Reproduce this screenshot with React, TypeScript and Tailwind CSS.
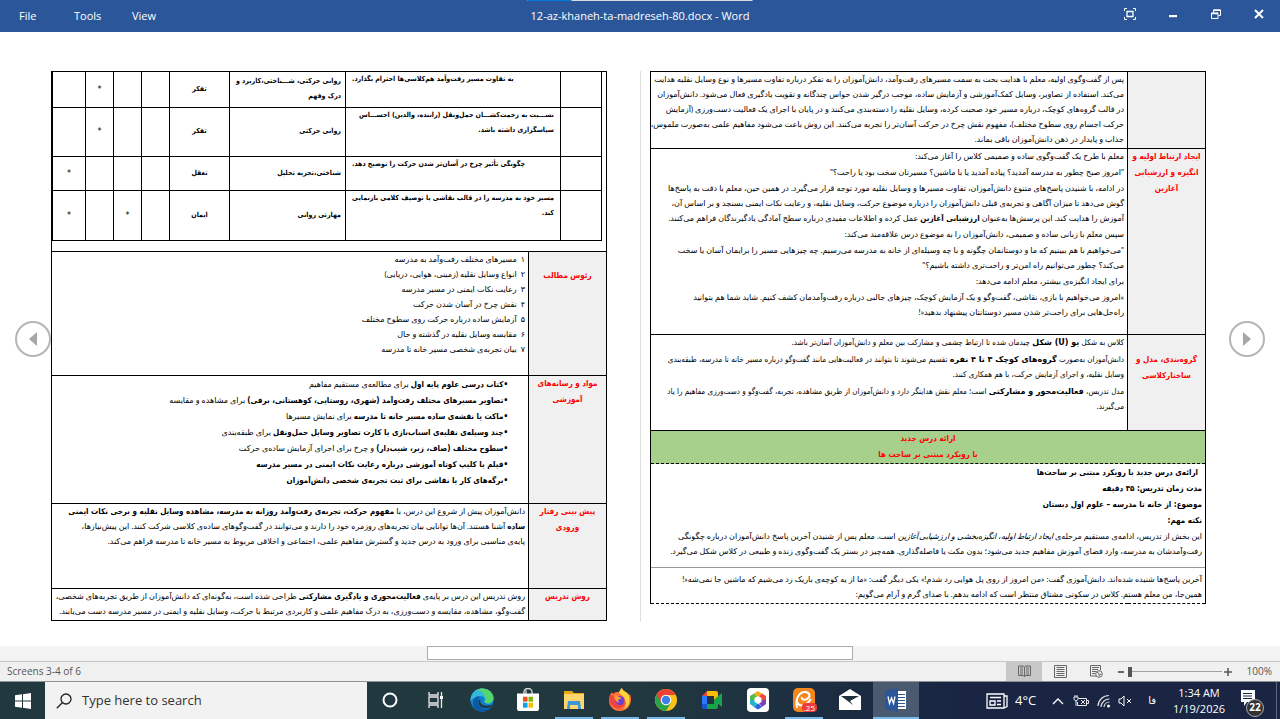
import { ReactNode } from "react";

const outcomes = [
  {
    lines: ["به تفاوت مسیر رفت‌وآمد هم‌کلاسی‌ها احترام بگذارد."],
    skills: ["روانی حرکتی، شـــناختی،کاربرد و", "درک وفهم"],
    element: "تفکر",
    marks: ["", "", "*", ""],
    height: "h-[35px]",
    end: true,
  },
  {
    lines: ["نســـبت به زحمت‌کشـــان حمل‌ونقل (راننده، والدین) احســـاس", "سپاسگزاری داشته باشد."],
    skills: ["روانی حرکتی"],
    element: "تفکر",
    marks: ["", "", "*", ""],
    height: "h-[49px]",
    end: false,
  },
  {
    lines: ["چگونگی تأثیر چرخ در آسان‌تر شدن حرکت را توضیح دهد."],
    skills: ["شناختی،تجزیه تحلیل"],
    element: "تعقل",
    marks: ["", "", "", "*"],
    height: "h-[34px]",
    end: true,
  },
  {
    lines: ["مسیر خود به مدرسه را در قالب نقاشی یا توصیف کلامی بازنمایی", "کند."],
    skills: ["مهارتی روانی"],
    element: "ایمان",
    marks: ["", "*", "", "*"],
    height: "h-[50px]",
    end: false,
  },
];

const topics = [
  "مسیرهای مختلف رفت‌وآمد به مدرسه",
  "انواع وسایل نقلیه (زمینی، هوایی، دریایی)",
  "رعایت نکات ایمنی در مسیر مدرسه",
  "نقش چرخ در آسان شدن حرکت",
  "آزمایش ساده درباره حرکت روی سطوح مختلف",
  "مقایسه وسایل نقلیه در گذشته و حال",
  "بیان تجربه‌ی شخصی مسیر خانه تا مدرسه",
];

const materials = [
  ["کتاب درسی علوم پایه اول", " برای مطالعه‌ی مستقیم مفاهیم"],
  ["تصاویر مسیرهای مختلف رفت‌وآمد (شهری، روستایی، کوهستانی، برفی)", " برای مشاهده و مقایسه"],
  ["ماکت یا نقشه‌ی ساده مسیر خانه تا مدرسه", " برای نمایش مسیرها"],
  ["چند وسیله‌ی نقلیه‌ی اسباب‌بازی یا کارت تصاویر وسایل حمل‌ونقل", " برای طبقه‌بندی"],
  ["سطوح مختلف (صاف، زبر، شیب‌دار)", " و چرخ برای اجرای آزمایش ساده‌ی حرکت"],
  ["فیلم یا کلیپ کوتاه آموزشی درباره رعایت نکات ایمنی در مسیر مدرسه", ""],
  ["برگه‌های کار یا نقاشی برای ثبت تجربه‌ی شخصی دانش‌آموزان", ""],
];

function Line({ children }: { children: ReactNode }) {
  return <span className="block whitespace-nowrap">{children}</span>;
}

function RowTitle({ lines, className = "" }: { lines: string[]; className?: string }) {
  return (
    <th
      scope="row"
      className={`w-[78px] border border-black bg-[#f0f0f0] p-0 align-top font-['DejaVu_Sans_Condensed','DejaVu_Sans',sans-serif] text-[8px] font-bold leading-4 text-[#fe0000] ${className}`}
    >
      {lines.map((line) => (
        <Line key={line}>{line}</Line>
      ))}
    </th>
  );
}

function LeftPage() {
  return (
    <table
      dir="rtl"
      className="w-full table-fixed border-collapse border border-black font-['Lato','DejaVu_Sans',sans-serif] text-[8px] leading-[15px] [&_b]:font-['DejaVu_Sans_Condensed','DejaVu_Sans',sans-serif] [&_b]:leading-none"
    >
      <colgroup>
        <col className="w-[78px]" />
        <col />
      </colgroup>
      <tbody>
        <tr className="h-[180px]">
          <td colSpan={2} className="border border-black p-0 pr-1 align-top">
            <table className="w-full table-fixed border-collapse font-['DejaVu_Sans_Condensed','DejaVu_Sans',sans-serif] text-[7px] font-bold">
              <colgroup>
                <col className="w-[41px]" />
                <col />
                <col className="w-[116px]" />
                <col className="w-[60px]" />
                <col className="w-[28px]" />
                <col className="w-[28px]" />
                <col className="w-[28px]" />
                <col className="w-[33px]" />
              </colgroup>
              <tbody>
                {outcomes.map((row, i) => (
                  <tr key={i} className={row.height}>
                    <td className="border border-t-0 border-black" />
                    <td className={`border border-t-0 border-black px-[6px] align-top ${row.end ? "text-left" : ""}`}>
                      {row.lines.map((line) => (
                        <Line key={line}>{line}</Line>
                      ))}
                    </td>
                    <td className="border border-t-0 border-black px-1">
                      {row.skills.map((line) => (
                        <Line key={line}>{line}</Line>
                      ))}
                    </td>
                    <td className="border border-t-0 border-black text-center">{row.element}</td>
                    {row.marks.map((mark, j) => (
                      <td key={j} className="border border-t-0 border-black text-center text-[9px] font-normal">
                        {mark}
                      </td>
                    ))}
                  </tr>
                ))}
              </tbody>
            </table>
          </td>
        </tr>
        <tr className="h-[124px]">
          <RowTitle lines={["رئوس مطالب"]} className="pt-4" />
          <td className="border border-black px-[3px] align-top">
            <ul>
              {topics.map((topic, i) => (
                <li key={topic} className="flex gap-1 whitespace-nowrap">
                  <span>{"۱۲۳۴۵۶۷"[i]}</span>
                  <span>{topic}</span>
                </li>
              ))}
            </ul>
          </td>
        </tr>
        <tr className="h-[128px]">
          <RowTitle lines={["مواد و رسانه‌های", "آموزشی"]} />
          <td className="border border-black px-5 align-top leading-4">
            <ul>
              {materials.map(([strong, rest]) => (
                <li key={strong} className="whitespace-nowrap">
                  <b>•{strong}</b>
                  {rest}
                </li>
              ))}
            </ul>
          </td>
        </tr>
        <tr className="h-[85px]">
          <RowTitle lines={["پیش بینی رفتار", "ورودی"]} />
          <td className="border border-black px-[3px] align-top">
            <Line>
              دانش‌آموزان پیش از شروع این درس، با <b>مفهوم حرکت، تجربه‌ی رفت‌وآمد روزانه به مدرسه، مشاهده وسایل نقلیه و برخی نکات ایمنی</b>
            </Line>
            <Line>
              <b>ساده</b> آشنا هستند. آن‌ها توانایی بیان تجربه‌های روزمره خود را دارند و می‌توانند در گفت‌وگوهای ساده‌ی کلاسی شرکت کنند. این پیش‌نیازها،
            </Line>
            <Line>پایه‌ی مناسبی برای ورود به درس جدید و گسترش مفاهیم علمی، اجتماعی و اخلاقی مربوط به مسیر خانه تا مدرسه فراهم می‌کند.</Line>
          </td>
        </tr>
        <tr className="h-[32px]">
          <RowTitle lines={["روش تدریس"]} />
          <td className="border border-black px-[3px] align-top">
            <Line>
              روش تدریس این درس بر پایه‌ی <b>فعالیت‌محوری و یادگیری مشارکتی</b> طراحی شده است، به‌گونه‌ای که دانش‌آموزان از طریق تجربه‌های شخصی،
            </Line>
            <Line>گفت‌وگو، مشاهده، مقایسه و دست‌ورزی، به درک مفاهیم علمی و کاربردی مرتبط با حرکت، وسایل نقلیه و ایمنی در مسیر مدرسه دست می‌یابند.</Line>
          </td>
        </tr>
      </tbody>
    </table>
  );
}

function RightPage() {
  return (
    <table
      dir="rtl"
      className="w-full table-fixed border-collapse font-['Lato','DejaVu_Sans',sans-serif] text-[8px] leading-[15px] [&_b]:leading-none"
    >
      <colgroup>
        <col className="w-[78px]" />
        <col />
      </colgroup>
      <tbody>
        <tr className="h-[77px]">
          <RowTitle lines={[]} />
          <td className="border border-black px-[3px] align-top">
            <Line>پس از گفت‌وگوی اولیه، معلم با هدایت بحث به سمت مسیرهای رفت‌وآمد، دانش‌آموزان را به تفکر درباره تفاوت مسیرها و نوع وسایل نقلیه هدایت</Line>
            <Line>می‌کند. استفاده از تصاویر، وسایل کمک‌آموزشی و آزمایش ساده، موجب درگیر شدن حواس چندگانه و تقویت یادگیری فعال می‌شود. دانش‌آموزان</Line>
            <Line>در قالب گروه‌های کوچک، درباره مسیر خود صحبت کرده، وسایل نقلیه را دسته‌بندی می‌کنند و در پایان با اجرای یک فعالیت دست‌ورزی (آزمایش</Line>
            <Line>حرکت اجسام روی سطوح مختلف)، مفهوم نقش چرخ در حرکت آسان‌تر را تجربه می‌کنند. این روش باعث می‌شود مفاهیم علمی به‌صورت ملموس،</Line>
            <Line>جذاب و پایدار در ذهن دانش‌آموزان باقی بماند.</Line>
          </td>
        </tr>
        <tr className="h-[186px]">
          <RowTitle lines={["ایجاد ارتباط اولیه و", "انگیزه و ارزشیابی", "آغازین"]} />
          <td className="border border-black px-[3px] align-top">
            <div className="flex flex-col gap-px">
              <p>معلم با طرح یک گفت‌وگوی ساده و صمیمی کلاس را آغاز می‌کند:</p>
              <p>"امروز صبح چطور به مدرسه آمدید؟ پیاده آمدید یا با ماشین؟ مسیرتان سخت بود یا راحت؟"</p>
              <p>
                <Line>در ادامه، با شنیدن پاسخ‌های متنوع دانش‌آموزان، تفاوت مسیرها و وسایل نقلیه مورد توجه قرار می‌گیرد. در همین حین، معلم با دقت به پاسخ‌ها</Line>
                <Line>گوش می‌دهد تا میزان آگاهی و تجربه‌ی قبلی دانش‌آموزان را درباره موضوع حرکت، وسایل نقلیه، و رعایت نکات ایمنی بسنجد و بر اساس آن،</Line>
                <Line>
                  آموزش را هدایت کند. این پرسش‌ها به‌عنوان <b className="font-['DejaVu_Sans_Condensed','DejaVu_Sans',sans-serif]">ارزشیابی آغازین</b> عمل کرده و اطلاعات مفیدی درباره سطح آمادگی یادگیرندگان فراهم می‌کنند.
                </Line>
              </p>
              <p>سپس معلم با زبانی ساده و صمیمی، دانش‌آموزان را به موضوع درس علاقه‌مند می‌کند:</p>
              <p>
                <Line>"می‌خواهیم با هم ببینیم که ما و دوستانمان چگونه و با چه وسیله‌ای از خانه به مدرسه می‌رسیم. چه چیزهایی مسیر را برایمان آسان یا سخت</Line>
                <Line>می‌کند؟ چطور می‌توانیم راه امن‌تر و راحت‌تری داشته باشیم؟"</Line>
              </p>
              <p>برای ایجاد انگیزه‌ی بیشتر، معلم ادامه می‌دهد:</p>
              <p>
                <Line>»امروز می‌خواهیم با بازی، نقاشی، گفت‌وگو و یک آزمایش کوچک، چیزهای جالبی درباره رفت‌وآمدمان کشف کنیم. شاید شما هم بتوانید</Line>
                <Line>راه‌حل‌هایی برای راحت‌تر شدن مسیر دوستانتان پیشنهاد بدهید«!</Line>
              </p>
            </div>
          </td>
        </tr>
        <tr className="h-[96px]">
          <RowTitle lines={["گروه‌بندی، مدل و", "ساختارکلاسی"]} className="pt-[17px]" />
          <td className="border border-black px-[3px] align-top font-['DejaVu_Sans_Condensed','DejaVu_Sans',sans-serif] [&_b]:font-['DejaVu_Sans',sans-serif]">
            <div className="flex flex-col gap-[2px]">
              <p>
                کلاس به شکل <b>یو (U) شکل</b> چیدمان شده تا ارتباط چشمی و مشارکت بین معلم و دانش‌آموزان آسان‌تر باشد.
              </p>
              <p>
                <Line>
                  دانش‌آموزان به‌صورت <b>گروه‌های کوچک ۳ تا ۴ نفره</b> تقسیم می‌شوند تا بتوانند در فعالیت‌هایی مانند گفت‌وگو درباره مسیر خانه تا مدرسه، طبقه‌بندی
                </Line>
                <Line>وسایل نقلیه، و اجرای آزمایش حرکت، با هم همکاری کنند.</Line>
              </p>
              <p>
                <Line>
                  مدل تدریس، <b>فعالیت‌محور و مشارکتی</b> است؛ معلم نقش هدایتگر دارد و دانش‌آموزان از طریق مشاهده، تجربه، گفت‌وگو و دست‌ورزی مفاهیم را یاد
                </Line>
                <Line>می‌گیرند.</Line>
              </p>
            </div>
          </td>
        </tr>
        <tr className="h-[33px]">
          <th
            colSpan={2}
            className="border border-black bg-[#a8d08d] p-0 font-['DejaVu_Sans_Condensed','DejaVu_Sans',sans-serif] text-[8px] leading-4 text-[#fe0000] [border-bottom-style:dashed]"
          >
            <Line>ارائه درس جدید</Line>
            <Line>با رویکرد مبتنی بر ساحت ها</Line>
          </th>
        </tr>
        <tr className="h-[140px]">
          <td colSpan={2} className="border border-black p-0 align-top [border-bottom-style:dashed] [border-top-style:dashed]">
            <div className="px-[3px] pt-px font-['DejaVu_Sans_Condensed','DejaVu_Sans',sans-serif] font-bold leading-4">
              <p className="px-1">ارائه‌ی درس جدید با رویکرد مبتنی بر ساحت‌ها</p>
              <p>مدت زمان تدریس: ۳۵ دقیقه</p>
              <p>موضوع: از خانه تا مدرسه – علوم اول دبستان</p>
              <p>نکته مهم:</p>
            </div>
            <p className="px-[3px]">
              <Line>
                این بخش از تدریس، ادامه‌ی مستقیم مرحله‌ی <i>ایجاد ارتباط اولیه، انگیزه‌بخشی و ارزشیابی آغازین</i> است. معلم پس از شنیدن آخرین پاسخ دانش‌آموزان درباره چگونگی
              </Line>
              <Line>رفت‌وآمدشان به مدرسه، وارد فضای آموزش مفاهیم جدید می‌شود؛ بدون مکث یا فاصله‌گذاری. همه‌چیز در بستر یک گفت‌وگوی زنده و طبیعی در کلاس شکل می‌گیرد.</Line>
            </p>
            <hr className="mb-1 mt-2 border-[#999]" />
            <p className="px-[3px]">
              <Line>آخرین پاسخ‌ها شنیده شده‌اند. دانش‌آموزی گفت: «من امروز از روی پل هوایی رد شدم!» یکی دیگر گفت: «ما از یه کوچه‌ی باریک رد می‌شیم که ماشین جا نمی‌شه«!</Line>
              <Line>همین‌جا، من معلم هستم. کلاس در سکوتی مشتاق منتظر است که ادامه بدهم. با صدای گرم و آرام می‌گویم:</Line>
            </p>
          </td>
        </tr>
      </tbody>
    </table>
  );
}

function PageButton({ label, flip = false }: { label: string; flip?: boolean }) {
  return (
    <button aria-label={label} className="flex size-9 items-center justify-center rounded-full border-2 border-[#b5b5b5] bg-white">
      <svg width="10" height="14" viewBox="0 0 10 14" className={flip ? "rotate-180" : ""}>
        <path d="M9 0v14L1 7z" fill="#a6a6a6" />
      </svg>
    </button>
  );
}

function TitleBar() {
  return (
    <header className="relative flex h-8 items-center bg-[#2b579a] text-[11px] text-white">
      <div className="absolute left-1/2 top-0 flex h-px w-[225px] -translate-x-1/2 bg-[#d8dce3]">
        <div className="w-11 bg-[#0078d7]" />
      </div>
      <nav className="flex flex-1">
        <button className="ml-[19px] w-[55px] text-left">File</button>
        <button className="w-[58px] text-left">Tools</button>
        <button className="text-left">View</button>
      </nav>
      <h1>12-az-khaneh-ta-madreseh-80.docx - Word</h1>
      <div className="flex flex-1 items-center justify-end pb-1">
        <button aria-label="Auto-hide" className="flex w-[43px] justify-center">
          <svg width="12" height="12" viewBox="0 0 12 12" fill="none" stroke="#fff">
            <path d="M.5 3V.5H3M9 .5h2.500V3M.5 9v2.500H3M11.500 9v2.500H9" />
            <path d="M3 3.500h6v5H3z" strokeWidth="1.300" />
          </svg>
        </button>
        <button aria-label="Minimize" className="flex w-[43px] justify-center">
          <svg width="10" height="10" viewBox="0 0 10 10">
            <path d="M1 6h8v2.200H1z" fill="#fff" />
          </svg>
        </button>
        <button aria-label="Restore" className="flex w-[43px] justify-center">
          <svg width="10" height="10" viewBox="0 0 10 10" fill="none" stroke="#fff">
            <path d="M.5 4h6.500v5.500H.5zM2.500 3.500V1h7v5.500H7.500" />
            <path d="M.5 4.500H7M2.500 1.300h7" strokeWidth="1.500" />
          </svg>
        </button>
        <button aria-label="Close" className="flex w-[43px] justify-center">
          <svg width="10" height="10" viewBox="0 0 10 10" stroke="#fff" strokeWidth="2">
            <path d="M1 1l8 8M9 1L1 9" />
          </svg>
        </button>
      </div>
    </header>
  );
}

function StatusBar() {
  return (
    <footer className="flex h-5 items-center border-t border-[#c6c6c6] bg-[#f0f0f0] text-[10px] text-[#555]">
      <span className="flex-1 pl-[7px]">Screens 3-4 of 6</span>
      <button aria-label="Read mode" className="flex h-full w-9 items-center justify-center bg-[#c8c8c8]">
        <svg width="13" height="13" viewBox="0 0 13 13" fill="none" stroke="#666">
          <path d="M6.500 2L5 1H.5v9.500H5l1.500 1 1.500-1h4.500V1H8zM6.500 2v9.500M2 3h3M2 5h3M2 7h3M2 9h3M8 3h3M8 5h3M8 7h3M8 9h3" />
        </svg>
      </button>
      <button aria-label="Print layout" className="flex w-9 justify-center">
        <svg width="13" height="13" viewBox="0 0 13 13" fill="none" stroke="#666">
          <path d="M.5.5h12v12H.5zM2.500 2.500h8M2.500 4.500h8M2.500 6.500h8M2.500 8.500h8M2.500 10.500h8" />
        </svg>
      </button>
      <button aria-label="Web layout" className="flex w-9 justify-center">
        <svg width="13" height="13" viewBox="0 0 13 13" fill="none" stroke="#666">
          <path d="M10.500 5V.5H.5v10.500H6M2 2.500h7M2 4.500h6M2 6.500h4M2 8.500h3" />
          <circle cx="9" cy="9" r="3.300" />
          <path d="M7 7l2 1.500v2l2-1.500" />
        </svg>
      </button>
      <button aria-label="Zoom out" className="ml-[3px] flex w-2 justify-center">
        <span className="h-[2px] w-[6px] bg-[#666]" />
      </button>
      <div className="flex w-[97px] items-center pl-[3px]">
        <span className="h-[10px] w-1 bg-[#555]" />
        <span className="h-px flex-1 bg-[#a0a0a0]" />
      </div>
      <button aria-label="Zoom in" className="flex w-3 justify-center">
        <svg width="8" height="8" viewBox="0 0 8 8" stroke="#555" strokeWidth="1.500">
          <path d="M4 0v8M0 4h8" />
        </svg>
      </button>
      <span className="w-[46px] pr-2 text-right">100%</span>
    </footer>
  );
}

const apps = [
  {
    name: "Cortana",
    state: "",
    icon: (
      <svg width="16" height="16" viewBox="0 0 16 16" fill="none" stroke="#fff" strokeWidth="2">
        <circle cx="8" cy="8" r="6.500" />
      </svg>
    ),
  },
  {
    name: "Task View",
    state: "",
    icon: (
      <svg width="16" height="16" viewBox="0 0 16 16" fill="none" stroke="#e8e8e8" strokeWidth="1.300">
        <path d="M1 0v3h9V0M1 16v-3h9v3M1 5h9v6H1zM13.500 0v16" />
        <path d="M12 4h3v3h-3z" fill="#fff" stroke="none" />
      </svg>
    ),
  },
  {
    name: "Edge",
    state: "",
    icon: (
      <svg width="24" height="24" viewBox="0 0 24 24">
        <circle cx="12" cy="12" r="11.500" fill="#0f7fd4" />
        <path d="M.6 11C1.500 4.500 6 .5 12 .5c7 0 11.500 5 11.500 9.500 0 3.500-2.500 5.500-5.500 5.500-2.500 0-4-1-3.500-2.200.8-1.300.8-5.300-4-5.300C5 8 1.500 11 .6 14z" fill="#35b8d8" />
        <path d="M12 .5c7 0 11.500 5 11.500 9.500 0 3.500-2.500 5.500-5.500 5.500-2.500 0-4-1-3.500-2.200C17 9 14 3 7 2c1.500-1 3-1.500 5-1.500z" fill="#55d66b" />
        <path d="M8.500 11c-2 5 2 10.500 8 10 2-.2 4-1.500 5-3-3 6-10 7-15 4C1 18 2 9 9.500 8.200c-.5.800-.8 1.800-1 2.800z" fill="#0c59a4" />
        <path d="M10.500 11c-1.500 4 2.500 8.500 10.500 6 .7-.2 1 .4.500 1-3 3.500-12 3-13-3-.3-2 .5-3.500 2-4z" fill="#21383f" />
      </svg>
    ),
  },
  {
    name: "Microsoft Store",
    state: "",
    icon: (
      <svg width="22" height="24" viewBox="0 0 22 22" preserveAspectRatio="none">
        <path d="M7 7V3.500a4 3 0 0 1 8 0V7M9 6V2" fill="none" stroke="#ddd" strokeWidth="1.300" />
        <path d="M0 5h22v14a2 2 0 0 1-2 2H2a2 2 0 0 1-2-2z" fill="#fff" />
        <path d="M6 8h4.500v4.500H6z" fill="#f25022" />
        <path d="M11.500 8H16v4.500h-4.500z" fill="#7fba00" />
        <path d="M6 13.500h4.500V18H6z" fill="#00a4ef" />
        <path d="M11.500 13.500H16V18h-4.500z" fill="#ffb900" />
      </svg>
    ),
  },
  {
    name: "File Explorer",
    state: "open",
    icon: (
      <svg width="22" height="20" viewBox="0 0 22 20">
        <path d="M1 1h8l2 2h10v5H1z" fill="#e8a712" />
        <path d="M1 4h20v15H1z" fill="#ffd66b" />
        <path d="M5 11h12l1 8h-3v-4H7v4H4z" fill="#3b97dc" />
      </svg>
    ),
  },
  {
    name: "Firefox",
    state: "open",
    icon: (
      <svg width="24" height="24" viewBox="0 0 24 24">
        <path d="M2 7l2-3 1 2c2-2 4-2 6-2 1-1 1-3 3-4 0 3 6 4 7 7l1-1c3 8-1 17-10 17C3 23-1 15 2 7z" fill="#ff7139" />
        <path d="M14 0c0 3 6 4 7 8 2 7-2 12-5 13 3-5 3-11-5-16 1-2 1-4 3-5z" fill="#ffd43a" />
        <path d="M2 7c3 0 4 1 6 2l4 1c-3 0-3 2-4 3 1 3 6 4 10 1-2 5-6 8-10 6C3 18 0 13 2 7z" fill="#f0453f" />
        <circle cx="12" cy="12.500" r="4.500" fill="#6b3fd4" />
        <path d="M6 8c2-1 4 0 5 1l3 1-4 2 1 3c-3-1-5-4-5-7z" fill="#ff9b32" />
      </svg>
    ),
  },
  {
    name: "Chrome",
    state: "open",
    icon: (
      <svg width="24" height="24" viewBox="0 0 24 24">
        <circle cx="12" cy="12" r="11" fill="#fbc116" />
        <path d="M12 12L2.500 6.500A11 11 0 0 0 12 23l4.800-8.300z" fill="#2ba24c" />
        <path d="M12 1A11 11 0 0 0 2.500 6.500L7.300 14.700 12 7h9.800A11 11 0 0 0 12 1z" fill="#ea4335" />
        <circle cx="12" cy="12" r="5.300" fill="#fff" />
        <circle cx="12" cy="12" r="4.200" fill="#3f7ee8" />
      </svg>
    ),
  },
  {
    name: "Google Meet",
    state: "",
    icon: (
      <svg width="22" height="20" viewBox="0 0 22 20">
        <path d="M6 1h9a2 2 0 0 1 2 2v4l-4 3V6H6z" fill="#fbbc04" />
        <path d="M6 1v5H1z" fill="#ea4335" />
        <path d="M1 6h5v8H1z" fill="#2979ff" />
        <path d="M1 14h5v5H2.500A1.500 1.500 0 0 1 1 17.500z" fill="#1558d6" />
        <path d="M6 14h7v-4l4 3v4a2 2 0 0 1-2 2H6zM16 7l5-4v14l-5-4-3-3z" fill="#18a34a" />
      </svg>
    ),
  },
  {
    name: "Rubika",
    state: "",
    icon: (
      <svg width="24" height="24" viewBox="0 0 24 24">
        <rect x="1" y="0" width="22" height="24" rx="4" fill="#fff" />
        <path d="M12 3l4 2.500-4 4-4-4z" fill="#f6a91b" />
        <path d="M16 5.500l4 2.500v4h-5l-3-2.500z" fill="#ef4a3c" />
        <path d="M20 12v4l-4 3-3-4 2-3z" fill="#7d3fb5" />
        <path d="M16 19l-4 2.500L8 19l4-4z" fill="#2b66d9" />
        <path d="M8 19l-4-3v-4h5l3 3z" fill="#20b8c9" />
        <path d="M4 12V8l4-2.500 4 4L9 12z" fill="#58b947" />
        <path d="M12 8l3.500 2v4L12 16l-3.500-2v-4z" fill="#fff" />
      </svg>
    ),
  },
  {
    name: "Eitaa",
    state: "open",
    icon: (
      <span className="relative">
        <svg width="24" height="24" viewBox="0 0 24 24">
          <rect x="1" y="0" width="22" height="24" rx="5" fill="#f5871f" />
          <path d="M5 20C3 11 7 4 13 4c5 0 6 5 2 7-3 1.500-6 0-5-2M5 14c3 6 9 4 14-3" fill="none" stroke="#fff" strokeWidth="2" />
        </svg>
        <span className="absolute -right-px bottom-0 rounded-sm bg-[#ee3b3b] px-[2px] text-[8px] leading-[9px] text-white">.25</span>
      </span>
    ),
  },
  {
    name: "Mail",
    state: "",
    icon: (
      <svg width="24" height="22" viewBox="0 0 24 22">
        <path d="M1 7l11-7 11 7v14H1z" fill="#fff" />
        <path d="M3 7h18l-9 5 3 4z" fill="#21303f" />
      </svg>
    ),
  },
  {
    name: "Word",
    state: "active",
    icon: (
      <svg width="22" height="24" viewBox="0 0 22 24">
        <path d="M11 3h10v18H11z" fill="#fff" />
        <path d="M13 6.500h7M13 9.500h7M13 12.500h7M13 15.500h7M13 18.500h7" stroke="#2b579a" />
        <path d="M0 2.500L13 0v24L0 21.500z" fill="#2b579a" />
        <path d="M3 8.500l1.500 7L6.500 10l2 5.500 1.500-7" fill="none" stroke="#fff" strokeWidth="1.300" />
      </svg>
    ),
  },
];

function Taskbar() {
  return (
    <nav aria-label="Taskbar" className="flex h-[38px] items-stretch border-t border-[#8a9296] bg-linear-to-r from-[#21383f] from-50% to-[#192543] to-75% text-white">
      <button aria-label="Start" className="flex w-[45px] items-center justify-center">
        <svg width="16" height="16" viewBox="0 0 16 16" fill="#fff">
          <path d="M0 2.300L7 1.300v6.200H0zM8 1.200L16 0v7.500H8zM0 8.500h7v6.200l-7-1zM8 8.500h8V16l-8-1.200z" />
        </svg>
      </button>
      <label className="flex w-[322px] items-center gap-[10px] bg-[#f2f2f2] pl-[11px]">
        <svg width="16" height="16" viewBox="0 0 16 16" fill="none" stroke="#222" strokeWidth="1.300">
          <circle cx="10" cy="6" r="5" />
          <path d="M6.500 9.500L.8 15.200" />
        </svg>
        <input
          aria-label="Search"
          placeholder="Type here to search"
          className="min-w-0 flex-1 bg-transparent text-[13px] outline-none placeholder:text-[#333] placeholder:opacity-100"
        />
      </label>
      {apps.map((app) => (
        <button
          key={app.name}
          aria-label={app.name}
          className={`flex w-[46px] flex-col items-center ${app.state === "active" ? "bg-[#4a5b70]" : "px-1"}`}
        >
          <span className="flex flex-1 items-center">{app.icon}</span>
          <span className={`h-[2px] w-full ${app.state ? "bg-[#76b9ed]" : ""}`} />
        </button>
      ))}
      <div className="flex flex-1 items-center justify-end">
        <svg width="22" height="16" viewBox="0 0 22 16" fill="none" stroke="#fff" strokeWidth="1.300">
          <path d="M1 1h17v14H1zM18 3h3v10.500L18 15M4 4.500h11M4 8h5v4H4zM11 8h4M11 11.500h4" />
        </svg>
        <span className="ml-[7px] text-[13px]">4°C</span>
        <svg className="ml-4" width="12" height="8" viewBox="0 0 12 8" fill="none" stroke="#fff" strokeWidth="1.300">
          <path d="M1 7l5-5 5 5" />
        </svg>
        <svg className="ml-[9px]" width="16" height="12" viewBox="0 0 16 12" fill="none" stroke="#e8e8e8">
          <path d="M5.500 3.500h8v7h-9V7M13.500 5.500h2v3h-2M1 2h4v2.500L3 6 1 4.500zM2 0v2M4 0v2M3 6v5M8 5l4 4M12 5L8 9" />
        </svg>
        <svg className="ml-2" width="14" height="14" viewBox="0 0 14 14" fill="none" stroke="#ddd" strokeWidth="1.200">
          <path d="M1 12A11 11 0 0 1 12 1.500M4 13a8.500 8.500 0 0 1 8.500-8M7 13a5.500 5.500 0 0 1 5.500-5" />
          <circle cx="11.500" cy="12" r="1.500" fill="#fff" stroke="none" />
        </svg>
        <svg className="ml-[7px]" width="14" height="12" viewBox="0 0 14 12" fill="none" stroke="#fff">
          <path d="M1 4h2l3-3v10L3 8H1zM9 4l4 4M13 4L9 8" />
        </svg>
        <span dir="rtl" className="ml-4 text-[10px]">فا</span>
        <div className="ml-[14px] w-[58px] text-center text-[11px] leading-4">
          <div>1:34 AM</div>
          <div>1/19/2026</div>
        </div>
        <button aria-label="Notifications" className="relative ml-3 mr-3 h-6 w-6">
          <svg width="24" height="24" viewBox="0 0 24 24">
            <path d="M1 1h14v12H7l-3 4v-4H1z" fill="#fff" />
            <path d="M3 4.500h9M3 7h9M3 9.500h9" stroke="#192543" />
          </svg>
          <span className="absolute -bottom-1 right-0 flex size-[18px] items-center justify-center rounded-full border border-[#aaa] bg-[#333] text-[10px] font-bold">22</span>
        </button>
        <span className="h-full w-1 border-l border-[#5b6478]" />
      </div>
    </nav>
  );
}

export default function App() {
  return (
    <div className="flex min-h-screen flex-col bg-white font-['Open_Sans','DejaVu_Sans',sans-serif] text-black">
      <TitleBar />
      <main className="flex flex-1 items-start pt-[39px]">
        <div className="flex w-[51px] shrink-0 justify-center self-center pb-10 pl-[14px]">
          <PageButton label="Previous screens" />
        </div>
        <section className="min-w-0 flex-1">
          <LeftPage />
        </section>
        <div className="flex w-[43px] shrink-0 justify-end self-stretch pb-6 pr-[9px]">
          <div className="w-px bg-[#dedede]" />
        </div>
        <section className="min-w-0 flex-1">
          <RightPage />
        </section>
        <div className="flex w-[74px] shrink-0 justify-center self-center pb-10 pl-[8px]">
          <PageButton label="Next screens" flip />
        </div>
      </main>
      <div className="flex h-[15px] justify-center bg-[#f3f3f3]">
        <div className="h-[14px] w-1/3 border border-[#ababab] bg-white" />
      </div>
      <StatusBar />
      <Taskbar />
    </div>
  );
}
